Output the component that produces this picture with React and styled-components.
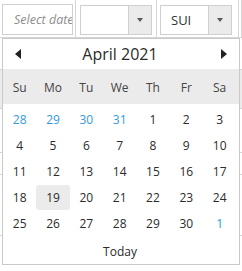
import React from 'react';
import styled, { createGlobalStyle } from 'styled-components';

const GlobalStyle = createGlobalStyle`
  html, body {
    margin: 0;
    padding: 0;
    background: #fff;
  }
  body {
    font-family: "Open Sans", "Noto Sans", sans-serif;
    color: #333;
  }
`;

const weekDays = ['Su', 'Mo', 'Tu', 'We', 'Th', 'Fr', 'Sa'];

function buildDays() {
  const days = [];
  for (let i = 0; i < 35; i++) {
    if (i < 4) days.push({ day: 28 + i, kind: 'prev' });
    else if (i - 3 <= 30) days.push({ day: i - 3, kind: 'current' });
    else days.push({ day: i - 33, kind: 'next' });
  }
  return days;
}

function Dropdown({ value }) {
  return (
    <SelectBox>
      <SelectValue>{value}</SelectValue>
      <SelectButton>
        <Caret />
      </SelectButton>
    </SelectBox>
  );
}

export default function App() {
  const days = buildDays();
  return (
    <Page>
      <GlobalStyle />
      <Table>
        <FilterRow>
          <FilterCell $pad="4px 0 0 2px">
            <DateInput placeholder="Select date" readOnly />
          </FilterCell>
          <FilterCell $pad="5px 0 0 4px">
            <Dropdown value="" />
          </FilterCell>
          <FilterCell $pad="5px 0 0 3px">
            <Dropdown value="SUI" />
          </FilterCell>
          <FilterCell />
        </FilterRow>
        <DataRow $h={31} />
        <DataRow $h={38} $shade />
        <DataRow $h={43} />
        <DataRow $h={21} />
        <DataRow $h={60} />
      </Table>

      <Popup>
        <Header>
          <NavArrow $dir="left" />
          <Title>April 2021</Title>
          <NavArrow $dir="right" />
        </Header>
        <WeekRow>
          {weekDays.map((d) => (
            <WeekDay key={d}>{d}</WeekDay>
          ))}
        </WeekRow>
        <DaysGrid>
          {days.map((d, i) => (
            <DayCell key={i}>
              <DayLink
                $kind={d.kind}
                $selected={d.kind === 'current' && d.day === 19}
              >
                {d.day}
              </DayLink>
            </DayCell>
          ))}
        </DaysGrid>
        <Footer>Today</Footer>
      </Popup>
    </Page>
  );
}

const Page = styled.div`
  position: relative;
  width: 242px;
  height: 271px;
  overflow: hidden;
  background: #fff;
`;

const Table = styled.div`
  display: flex;
  flex-direction: column;
`;

const FilterRow = styled.div`
  display: grid;
  grid-template-columns: 76px 81px 82px 1fr;
  height: 38px;
  box-sizing: border-box;
  border-bottom: 1px solid #d6d6d6;
`;

const FilterCell = styled.div`
  box-sizing: border-box;
  padding: ${(p) => p.$pad || '0'};
  border-right: 1px solid #d6d6d6;
`;

const DateInput = styled.input`
  box-sizing: border-box;
  width: 71px;
  height: 31px;
  margin: 0;
  padding: 0 0 0 11px;
  border: 1px solid #cfcfcf;
  background: #fff;
  font-family: "Open Sans", sans-serif;
  font-size: 12.5px;
  outline: none;

  &::placeholder {
    color: #8c8c8c;
    font-style: italic;
  }
`;

const SelectBox = styled.div`
  box-sizing: border-box;
  display: flex;
  width: 72px;
  height: 30px;
  border: 1px solid #cfcfcf;
  background: #fff;
`;

const SelectValue = styled.div`
  flex: 1;
  display: flex;
  align-items: center;
  padding-left: 10px;
  font-size: 13px;
  color: #333;
`;

const SelectButton = styled.div`
  width: 22px;
  display: flex;
  align-items: center;
  justify-content: center;
  background: #ebebeb;
  border-left: 1px solid #cfcfcf;
`;

const Caret = styled.span`
  width: 0;
  height: 0;
  border-left: 3.5px solid transparent;
  border-right: 3.5px solid transparent;
  border-top: 4px solid #595959;
`;

const DataRow = styled.div`
  height: ${(p) => p.$h}px;
  border-bottom: 1px solid #d6d6d6;
  background: ${(p) => (p.$shade ? '#ebebeb' : '#fff')};
`;

const Popup = styled.div`
  position: absolute;
  top: 38px;
  left: 2px;
  width: 238px;
  height: 227px;
  box-sizing: border-box;
  border: 1px solid #c9c9c9;
  background: #fff;
  display: flex;
  flex-direction: column;
`;

const Header = styled.div`
  height: 30px;
  display: flex;
  align-items: center;
  justify-content: space-between;
  padding: 0 12px;
`;

const Title = styled.div`
  font-size: 16px;
  color: #2b2b2b;
  margin-right: 2px;
`;

const NavArrow = styled.span`
  width: 0;
  height: 0;
  border-top: 5px solid transparent;
  border-bottom: 5px solid transparent;
  ${(p) =>
    p.$dir === 'left'
      ? 'border-right: 6px solid #222;'
      : 'border-left: 6px solid #222;'}
`;

const WeekRow = styled.div`
  height: 35px;
  box-sizing: border-box;
  padding-top: 2px;
  display: grid;
  grid-template-columns: repeat(7, 33.33px);
  align-items: center;
  background: #ebebeb;
`;

const WeekDay = styled.div`
  text-align: center;
  font-size: 12px;
  color: #444;
`;

const DaysGrid = styled.div`
  display: grid;
  grid-template-columns: repeat(7, 33.33px);
  grid-auto-rows: 26px;
  padding-top: 3px;
`;

const DayCell = styled.div`
  display: flex;
  align-items: flex-start;
`;

const dayColor = { prev: '#3399e0', next: '#14a3e8', current: '#2b2b2b' };

const DayLink = styled.div`
  width: 100%;
  height: 25px;
  display: flex;
  align-items: center;
  justify-content: center;
  font-size: 12px;
  border-radius: 3px;
  color: ${(p) => dayColor[p.$kind]};
  background: ${(p) => (p.$selected ? '#ebebeb' : 'transparent')};
`;

const Footer = styled.div`
  flex: 1;
  display: flex;
  align-items: center;
  justify-content: center;
  padding-top: 2px;
  padding-right: 2px;
  font-size: 12px;
  color: #2b2b2b;
`;
